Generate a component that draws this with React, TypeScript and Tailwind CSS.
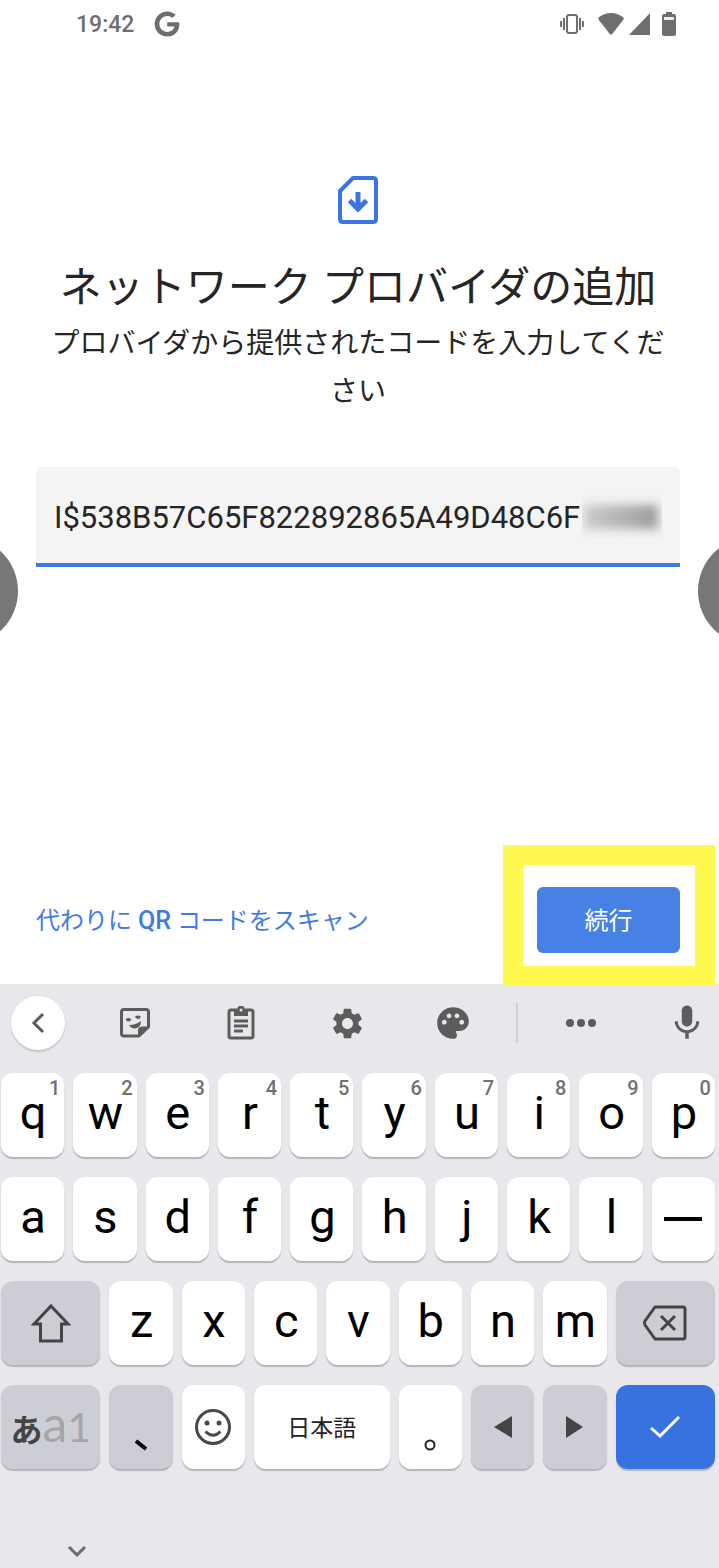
import { useState } from "react";
import type { ReactNode } from "react";
import { FaGoogle } from "react-icons/fa";
import { MdMic, MdPalette, MdSettings } from "react-icons/md";

type Tone = "light" | "dark" | "primary";

interface KeyProps {
  children: ReactNode;
  label?: string;
  hint?: string;
  tone?: Tone;
}

const TONES: Record<Tone, string> = {
  light: "bg-white text-black",
  dark: "bg-[#cdcdd6] text-[#444444]",
  primary: "bg-[#3871e0] text-white",
};

const TOP_ROW = ["q", "w", "e", "r", "t", "y", "u", "i", "o", "p"];
const HOME_ROW = ["a", "s", "d", "f", "g", "h", "j", "k", "l"];
const BOTTOM_ROW = ["z", "x", "c", "v", "b", "n", "m"];

function Key({ children, label, hint, tone = "light" }: KeyProps) {
  return (
    <button
      type="button"
      aria-label={label}
      className={`relative flex h-[84px] min-w-0 items-center justify-center rounded-xl shadow-[0_2px_1px_#b4b4ba] ${TONES[tone]}`}
    >
      {children}
      {hint && (
        <span className="absolute top-1 right-1 text-[20px] leading-[22px] font-medium text-[#707070]">{hint}</span>
      )}
    </button>
  );
}

function LetterKey({ letter, hint }: { letter: string; hint?: string }) {
  return (
    <Key hint={hint}>
      <span className="pb-[6px] pl-px text-[47px] leading-none">{letter}</span>
    </Key>
  );
}

function StatusBar() {
  return (
    <header className="flex h-12 items-center justify-between pr-[42px] pl-[76px] text-[#6e6e6e]">
      <div className="flex items-center gap-5">
        <time className="text-[23px] leading-none font-medium">19:42</time>
        <FaGoogle className="size-[26px]" />
      </div>
      <div className="flex items-center">
        <svg className="mr-3 h-[24px] w-[26px]" viewBox="0 0 26 24" fill="none" stroke="currentColor" strokeWidth="2">
          <rect x="8" y="3" width="10" height="18" rx="2" />
          <path d="M5 6v12M21 6v12M2 9v6M24 9v6" />
        </svg>
        <svg className="mr-1 h-[24px] w-[28px]" viewBox="0 0 28 24" fill="currentColor">
          <path d="M1 6Q7 1 14 1T27 6Q26 9 23 12L16 21Q14 24 12 21L5 12Q2 9 1 6Z" />
        </svg>
        <svg className="mr-[10px] h-[24px] w-[22px]" viewBox="0 0 22 24" fill="currentColor">
          <path d="M21 1V23H0Z" />
        </svg>
        <svg className="h-[24px] w-[16px]" viewBox="0 0 16 24" fill="currentColor">
          <path d="M5 0h6v2h2q2 0 2 2v18q0 2-2 2H3q-2 0-2-2V4q0-2 2-2h2Z" />
          <path d="M3 5h10v3H3Z" fill="#eeeeee" />
        </svg>
      </div>
    </header>
  );
}

function SimDownloadIcon() {
  return (
    <svg className="h-12 w-10" viewBox="0 0 40 48" fill="none" stroke="#3b74e4" strokeWidth="4" strokeLinejoin="round">
      <path d="M15 2H35Q38 2 38 5V43Q38 46 35 46H5Q2 46 2 43V15Z" />
      <path d="M20 16V32M11.500 24.500L20 33L28.500 24.500" strokeLinejoin="miter" strokeWidth="5" />
    </svg>
  );
}

function StickerIcon() {
  return (
    <svg className="size-8" viewBox="0 0 32 32" fill="none" stroke="currentColor" strokeWidth="3">
      <path d="M20 29H5Q2.500 29 2.500 26.500V5Q2.500 2.500 5 2.500H27Q29.500 2.500 29.500 5V20Z" strokeLinejoin="round" />
      <path d="M19.500 29V23Q19.500 20 22.500 20H29.500Z" fill="currentColor" strokeWidth="1" />
      <path d="M7.500 13.500q1.500-2 4 0M17 11q1.500-2 4 0" strokeWidth="3" />
      <path d="M10 18Q17 18 22 14Q22 21 16 21.500Q12 21.500 10 18Z" fill="currentColor" stroke="none" />
    </svg>
  );
}

function ClipboardIcon() {
  return (
    <svg className="h-[34px] w-[28px]" viewBox="0 0 28 34" fill="none" stroke="currentColor" strokeWidth="3">
      <rect x="2" y="4" width="24" height="28" rx="2" />
      <path d="M7 3h3.500a3.500 3.500 0 0 1 7 0H21v7H7Z" fill="currentColor" stroke="none" />
      <circle cx="14" cy="4" r="1.500" fill="#e8e8ec" stroke="none" />
      <path d="M7 15h14M7 20h14M7 25h9" />
    </svg>
  );
}

function Toolbar() {
  return (
    <div className="grid h-[78px] grid-cols-[82fr_106fr_106fr_106fr_106fr_22fr_106fr_85fr] items-center justify-items-center text-[#5c5c5c]">
      <button
        type="button"
        aria-label="戻る"
        className="ml-[11px] flex size-[54px] items-center justify-center justify-self-start rounded-full bg-white shadow-[0_2px_2px_#c4c4c8]"
      >
        <svg className="h-[22px] w-[14px]" viewBox="0 0 14 22" fill="none" stroke="currentColor" strokeWidth="3">
          <path d="M12 2L3 11L12 20" />
        </svg>
      </button>
      <button type="button" aria-label="ステッカー">
        <StickerIcon />
      </button>
      <button type="button" aria-label="クリップボード">
        <ClipboardIcon />
      </button>
      <button type="button" aria-label="設定">
        <MdSettings className="size-[37px]" />
      </button>
      <button type="button" aria-label="テーマ">
        <MdPalette className="size-[38px]" />
      </button>
      <div className="h-10 w-[2px] bg-[#d0d0d8]" />
      <button type="button" aria-label="その他">
        <svg className="h-2 w-[30px]" viewBox="0 0 30 8" fill="currentColor">
          <circle cx="4" cy="4" r="4" />
          <circle cx="15" cy="4" r="4" />
          <circle cx="26" cy="4" r="4" />
        </svg>
      </button>
      <button type="button" aria-label="音声入力" className="mr-[11px] justify-self-end">
        <MdMic className="size-[42px]" />
      </button>
    </div>
  );
}

function Keyboard() {
  return (
    <section className="flex flex-1 flex-col bg-[#e8e8ec]" aria-label="キーボード">
      <Toolbar />
      <div className="flex flex-col gap-5 pt-[11px] pr-1 pl-px">
        <div className="grid grid-cols-10 gap-[9px]">
          {TOP_ROW.map((letter, i) => (
            <LetterKey key={letter} letter={letter} hint={String((i + 1) % 10)} />
          ))}
        </div>
        <div className="grid grid-cols-10 gap-[9px]">
          {HOME_ROW.map((letter) => (
            <LetterKey key={letter} letter={letter} />
          ))}
          <Key label="長音">
            <span className="h-1 w-[38px] bg-black" />
          </Key>
        </div>
        <div className="grid grid-cols-[99fr_repeat(7,63fr)_99fr] gap-[9px]">
          <Key label="シフト" tone="dark">
            <svg className="h-10 w-10" viewBox="0 0 40 40" fill="none" stroke="currentColor" strokeWidth="3">
              <path d="M20 3L37 21H30.500V38H9.500V21H3Z" />
            </svg>
          </Key>
          {BOTTOM_ROW.map((letter) => (
            <LetterKey key={letter} letter={letter} />
          ))}
          <Key label="削除" tone="dark">
            <svg className="h-9 w-[46px]" viewBox="0 0 46 36" fill="none" stroke="currentColor" strokeWidth="3">
              <path d="M13 2H41Q43 2 43 4V32Q43 34 41 34H13L3 20Q2 18 3 16Z" strokeLinejoin="round" />
              <path d="M19 11L33 25M33 11L19 25" />
            </svg>
          </Key>
        </div>
        <div className="grid grid-cols-[99fr_63fr_63fr_135fr_63fr_63fr_63fr_99fr] gap-[9px]">
          <Key label="文字種の切り替え" tone="dark">
            <span className="flex items-baseline pb-2">
              <span className="text-[32px] leading-none font-bold">あ</span>
              <span className="font-['Lato',sans-serif] text-[50px] leading-none text-[#a6a6a9]">a</span>
              <span className="font-['Lato',sans-serif] text-[41px] leading-none text-[#a6a6a9]">1</span>
            </span>
          </Key>
          <Key label="読点" tone="dark">
            <svg className="mt-9 h-3 w-3" viewBox="0 0 12 12" fill="none" stroke="#000000" strokeWidth="4">
              <path d="M1 2L11 10" />
            </svg>
          </Key>
          <Key label="絵文字">
            <svg className="size-[38px]" viewBox="0 0 38 38" fill="none" stroke="#484848" strokeWidth="3">
              <circle cx="19" cy="19" r="16.500" />
              <circle cx="13" cy="15" r="2.500" fill="#484848" stroke="none" />
              <circle cx="25" cy="15" r="2.500" fill="#484848" stroke="none" />
              <path d="M11.500 23.500Q19 31 26.500 23.500" />
            </svg>
          </Key>
          <Key>
            <span className="pt-1 text-[23px] leading-8 text-[#222222]">日本語</span>
          </Key>
          <Key label="句点">
            <svg className="mt-9 size-3" viewBox="0 0 12 12" fill="none" stroke="#222222" strokeWidth="2">
              <circle cx="6" cy="6" r="4.500" />
            </svg>
          </Key>
          <Key label="左へ" tone="dark">
            <svg className="h-[22px] w-[18px]" viewBox="0 0 18 22" fill="currentColor">
              <path d="M18 0V22L0 11Z" />
            </svg>
          </Key>
          <Key label="右へ" tone="dark">
            <svg className="h-[22px] w-[17px]" viewBox="0 0 17 22" fill="currentColor">
              <path d="M0 0L17 11L0 22Z" />
            </svg>
          </Key>
          <Key label="完了" tone="primary">
            <svg className="h-6 w-8" viewBox="0 0 32 24" fill="none" stroke="currentColor" strokeWidth="3">
              <path d="M2 13L11 21L30 2" />
            </svg>
          </Key>
        </div>
      </div>
      <div className="mt-auto pb-2 pl-[67px] text-[#6a6a6a]">
        <button type="button" aria-label="キーボードを閉じる" className="block">
          <svg className="h-[18px] w-[20px]" viewBox="0 0 20 18" fill="none" stroke="currentColor" strokeWidth="3">
            <path d="M2 5L10 13L18 5" />
          </svg>
        </button>
      </div>
    </section>
  );
}

export default function App() {
  const [code, setCode] = useState("I$538B57C65F822892865A49D48C6F");

  return (
    <div className="relative flex min-h-screen flex-col overflow-hidden bg-white font-['Roboto','Noto_Sans_CJK_JP',sans-serif] text-[#252525]">
      <StatusBar />
      <main className="flex h-[936px] flex-col pt-32 pr-[39px] pl-9">
        <div className="flex justify-center">
          <SimDownloadIcon />
        </div>
        <h1 className="mt-[38px] text-center text-[42px] leading-[52px]">ネットワーク プロバイダの追加</h1>
        <p className="mt-[6px] px-3 text-center text-[28px] leading-[48px]">
          プロバイダから提供されたコードを入力してください
        </p>
        <div className="relative mt-[51px]">
          <input
            type="text"
            aria-label="コード"
            value={code}
            onChange={(e) => setCode(e.target.value)}
            className="h-[100px] w-full rounded-t-md border-b-4 border-[#3f78e4] bg-[#f4f4f4] px-[18px] pt-1 text-[31px] outline-none"
          />
          {/* hides the last characters of the code */}
          <div className="absolute top-7 right-[18px] flex h-11 w-20 items-center justify-end overflow-hidden bg-[#f2f2f2] pr-1">
            <div className="h-6 w-[74px] bg-linear-to-r from-[#cccccc] to-[#9c9c9c] blur-[5px]" />
          </div>
        </div>
        <div className="mt-auto mb-[31px] flex items-center justify-between">
          <a href="#scan" className="pt-[2px] text-[24px] leading-8 text-[#427ae2]">
            代わりに <span className="text-[25px] font-medium">QR</span> コードをスキャン
          </a>
          <div className="relative">
            <div className="pointer-events-none absolute -top-[42px] -right-[35px] -bottom-[33px] -left-[34px] z-10 border-[20px] border-[#fff94f]" />
            <button
              type="button"
              className="h-[66px] w-[143px] rounded-md bg-[#4881e5] pt-[2px] text-[24px] text-white"
            >
              続行
            </button>
          </div>
        </div>
      </main>
      <Keyboard />
      <button
        type="button"
        aria-label="前へ"
        className="absolute top-[537px] -left-[90px] size-[108px] rounded-full bg-[#777779]"
      />
      <button
        type="button"
        aria-label="次へ"
        className="absolute top-[537px] -right-[87px] size-[108px] rounded-full bg-[#777779]"
      />
    </div>
  );
}
